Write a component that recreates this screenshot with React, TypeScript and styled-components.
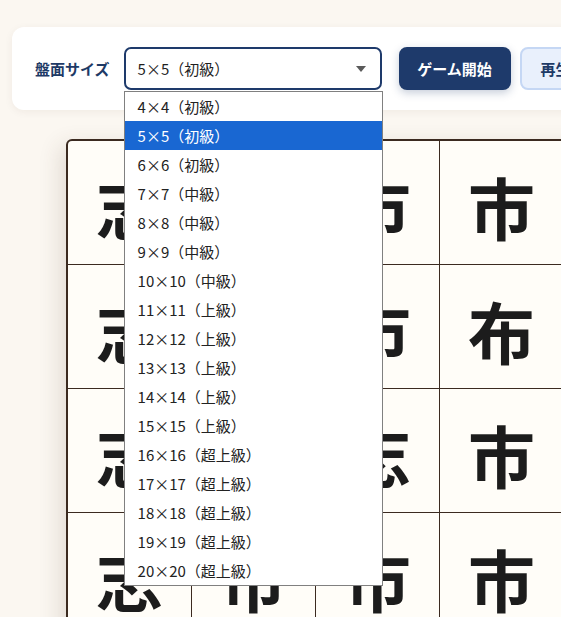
import React from "react";
import styled, { createGlobalStyle } from "styled-components";

const Global = createGlobalStyle`
  html, body { margin: 0; padding: 0; }
  body {
    background: #fbf7f1;
    font-family: "Noto Sans CJK JP", "Noto Sans", sans-serif;
    overflow: hidden;
    width: 561px;
    height: 617px;
  }
`;

const Page = styled.div`
  padding: 27px 0 0 12px;
  width: 760px;
`;

const Panel = styled.div`
  position: relative;
  display: flex;
  align-items: center;
  background: #ffffff;
  border-radius: 12px;
  padding: 20px 23px;
  box-shadow: 0 2px 8px rgba(60, 40, 20, 0.06);
`;

const Label = styled.span`
  font-size: 15px;
  font-weight: 700;
  color: #1e3a66;
  margin-right: 14px;
  white-space: nowrap;
`;

const SelectWrap = styled.div`
  position: relative;
  margin-right: 17px;
`;

const SelectBox = styled.div`
  box-sizing: border-box;
  width: 258px;
  height: 43px;
  border: 2px solid #1e3a6b;
  border-radius: 7px;
  display: flex;
  align-items: center;
  justify-content: space-between;
  padding: 0 14px 0 12px;
  font-size: 15px;
  color: #1f1f1f;
  background: #fff;
`;

const Arrow = styled.span`
  width: 0;
  height: 0;
  border-left: 5px solid transparent;
  border-right: 5px solid transparent;
  border-top: 6px solid #5a5a5a;
`;

const List = styled.ul`
  position: absolute;
  left: 0;
  top: 44px;
  width: 259px;
  box-sizing: border-box;
  margin: 0;
  padding: 0;
  list-style: none;
  background: #fff;
  border: 1px solid #808080;
  z-index: 10;
`;

const Item = styled.li<{ $active?: boolean }>`
  height: 29px;
  line-height: 29px;
  padding-left: 13px;
  font-size: 15px;
  color: ${(p) => (p.$active ? "#ffffff" : "#222222")};
  background: ${(p) => (p.$active ? "#1967d2" : "transparent")};
  white-space: nowrap;
`;

const PrimaryButton = styled.button`
  box-sizing: border-box;
  height: 43px;
  width: 112px;
  border: none;
  border-radius: 8px;
  background: #1e3a6b;
  color: #fff;
  font-family: inherit;
  font-size: 15px;
  font-weight: 700;
  margin-right: 9px;
  box-shadow: 0 3px 8px rgba(30, 58, 107, 0.25);
  white-space: nowrap;
`;

const SecondaryButton = styled.button`
  box-sizing: border-box;
  height: 43px;
  border: 2px solid #c5d7f4;
  border-radius: 8px;
  background: #e9f0fc;
  color: #1e3a66;
  font-family: inherit;
  font-size: 15px;
  font-weight: 700;
  padding: 0 19px;
  white-space: nowrap;
`;

const Board = styled.div`
  margin: 29px 0 0 54px;
  display: grid;
  grid-template-columns: repeat(5, 123px);
  grid-auto-rows: 123px;
  gap: 1px;
  width: max-content;
  background: #3b2a20;
  border: 2px solid #3b2a20;
  border-radius: 6px;
  overflow: hidden;
  box-shadow: -6px 6px 22px rgba(80, 60, 40, 0.14);
`;

const Cell = styled.div`
  background: #fffdf8;
  display: flex;
  align-items: center;
  justify-content: center;
  font-size: 67px;
  font-weight: 700;
  color: #1c1c1c;
  padding-top: 6px;
  box-sizing: border-box;
`;

const options = [
  "4×4（初級）",
  "5×5（初級）",
  "6×6（初級）",
  "7×7（中級）",
  "8×8（中級）",
  "9×9（中級）",
  "10×10（中級）",
  "11×11（上級）",
  "12×12（上級）",
  "13×13（上級）",
  "14×14（上級）",
  "15×15（上級）",
  "16×16（超上級）",
  "17×17（超上級）",
  "18×18（超上級）",
  "19×19（超上級）",
  "20×20（超上級）",
];

const board = [
  ["志", "市", "市", "市", "市"],
  ["志", "市", "市", "布", "市"],
  ["志", "市", "志", "市", "市"],
  ["志", "市", "市", "市", "市"],
  ["志", "市", "市", "市", "市"],
];

export default function App() {
  return (
    <>
      <Global />
      <Page>
        <Panel>
          <Label>盤面サイズ</Label>
          <SelectWrap>
            <SelectBox>
              <span>5×5（初級）</span>
              <Arrow />
            </SelectBox>
            <List>
              {options.map((o, i) => (
                <Item key={o} $active={i === 1}>
                  {o}
                </Item>
              ))}
            </List>
          </SelectWrap>
          <PrimaryButton>ゲーム開始</PrimaryButton>
          <SecondaryButton>再生成</SecondaryButton>
        </Panel>
        <Board>
          {board.flat().map((c, i) => (
            <Cell key={i}>{c}</Cell>
          ))}
        </Board>
      </Page>
    </>
  );
}
